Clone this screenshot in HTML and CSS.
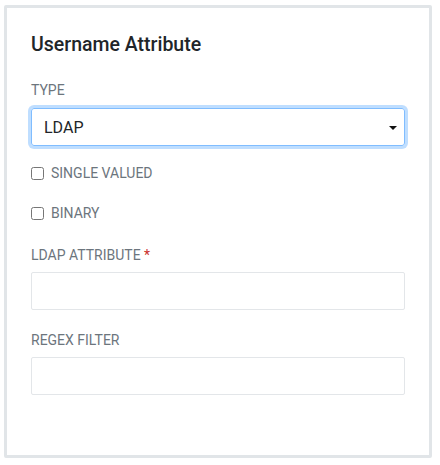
FILE: index.html
```html
<!DOCTYPE html>
<html>
<head>
<meta charset="utf-8">
<link rel="stylesheet" href="styles.css">
</head>
<body>
<div class="card">
  <h2 class="title">Username Attribute</h2>
  <div class="group group-type">
    <label class="label">TYPE</label>
    <div class="select">
      <span class="select-value">LDAP</span>
      <span class="caret"></span>
    </div>
  </div>
  <label class="check check-first"><input type="checkbox" class="box"><span>SINGLE VALUED</span></label>
  <label class="check"><input type="checkbox" class="box"><span>BINARY</span></label>
  <div class="group group-attr">
    <label class="label">LDAP ATTRIBUTE <span class="req">*</span></label>
    <input class="input" type="text">
  </div>
  <div class="group group-regex">
    <label class="label">REGEX FILTER</label>
    <input class="input" type="text">
  </div>
</div>
</body>
</html>
```
FILE: styles.css
```css
html, body {
  margin: 0;
  padding: 0;
  background: #ffffff;
  font-family: Roboto, "Liberation Sans", Arial, sans-serif;
}
.card {
  box-sizing: border-box;
  margin: 5px 0 0 4px;
  width: 428px;
  height: 453px;
  border: 3px solid #e1e5e8;
  border-radius: 2px;
  padding: 25px 24px 24px 24px;
  background: #fff;
}
.title {
  margin: 0;
  font-size: 19.5px;
  line-height: 24px;
  font-weight: 500;
  color: #212529;
}
.group {
  display: flex;
  flex-direction: column;
}
.group-type { margin-top: 23px; }
.label {
  display: block;
  font-size: 14px;
  line-height: 20px;
  color: #6c757d;
  margin-bottom: 7px;
}
.group-type .label { margin-bottom: 8px; }
.req { color: #c9302c; }
.select {
  box-sizing: border-box;
  height: 38px;
  border: 1px solid #80bdff;
  border-radius: 3px;
  box-shadow: 0 0 0 3px rgba(0, 123, 255, 0.25);
  display: flex;
  align-items: center;
  justify-content: space-between;
  padding: 0 7px 0 12px;
  font-size: 16px;
  color: #212529;
}
.caret {
  width: 0;
  height: 0;
  border-left: 4px solid transparent;
  border-right: 4px solid transparent;
  border-top: 4px solid #111;
  margin-top: 1px;
}
.check {
  display: flex;
  align-items: center;
  height: 20px;
  font-size: 14px;
  color: #6c757d;
  margin-top: 20px;
}
.check-first { margin-top: 17px; }
.box {
  margin: 0 7px 0 0;
  width: 13px;
  height: 13px;
}
.group-attr { margin-top: 22px; }
.group-regex { margin-top: 20px; }
.input {
  box-sizing: border-box;
  width: 100%;
  height: 38px;
  border: 1px solid #e3e6e9;
  border-radius: 2px;
  margin: 0;
  padding: 0 12px;
  font-family: inherit;
  font-size: 16px;
  outline: none;
}
```
